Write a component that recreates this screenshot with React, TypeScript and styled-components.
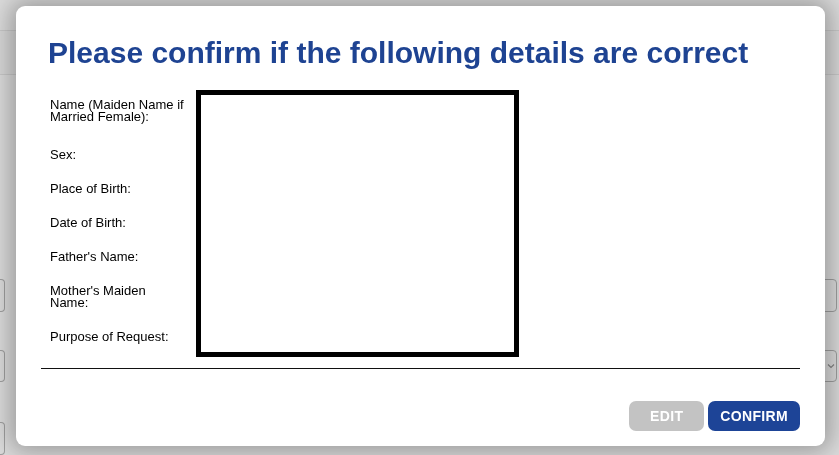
import React from "react";
import styled, { createGlobalStyle } from "styled-components";

const GlobalStyle = createGlobalStyle`
  html, body { margin: 0; padding: 0; }
  body {
    width: 839px;
    height: 455px;
    overflow: hidden;
    background: #ffffff;
    font-family: "Liberation Sans", Arial, Helvetica, sans-serif;
  }
`;

/* ---------- underlying page (dimmed by the overlay) ---------- */

const Page = styled.div`
  width: 839px;
  height: 455px;
  background: #ffffff;
  display: flex;
  flex-direction: column;
`;

const TopBand = styled.div`
  margin-top: 30px;
  height: 45px;
  border-top: 1px solid #e9e9e9;
  border-bottom: 1px solid #e9e9e9;
  background: #fbfbfb;
`;

const FieldRow = styled.div<{ $top: number }>`
  margin-top: ${(p) => p.$top}px;
  height: 34px;
  display: flex;
  justify-content: space-between;
`;

const LeftStub = styled.div`
  width: 5px;
  height: 100%;
  box-sizing: border-box;
  border: 1px solid #b9b9b9;
  border-left: none;
  border-radius: 0 4px 4px 0;
`;

const RightStub = styled.div`
  width: 14px;
  margin-right: 2px;
  height: 100%;
  box-sizing: border-box;
  border: 1px solid #b9b9b9;
  border-radius: 0 4px 4px 0;
  display: flex;
  align-items: center;
  justify-content: flex-end;
  padding-right: 1px;
`;

/* ---------- modal ---------- */

const Overlay = styled.div`
  position: fixed;
  inset: 0;
  background: rgba(0, 0, 0, 0.14);
  display: flex;
  align-items: flex-start;
  padding: 6px 0 0 16px;
`;

const Modal = styled.div`
  width: 809px;
  height: 440px;
  box-sizing: border-box;
  background: #ffffff;
  border-radius: 9px;
  box-shadow: 0 0 24px 6px rgba(0, 0, 0, 0.3);
  padding: 0 25px 15px 25px;
  display: flex;
  flex-direction: column;
`;

const Title = styled.h1`
  margin: 30px 0 0 0;
  padding-left: 7px;
  font-family: "Liberation Sans", Arial, Helvetica, sans-serif;
  font-weight: 700;
  font-size: 30px;
  line-height: 34px;
  color: #1e4392;
  white-space: nowrap;
`;

const Details = styled.div`
  margin-top: 20px;
  padding-left: 9px;
  display: flex;
  align-items: flex-start;
  gap: 10px;
`;

const Labels = styled.div`
  width: 136px;
  padding-top: 9px;
  display: flex;
  flex-direction: column;
  gap: 22px;
`;

const Label = styled.div<{ $extra?: number }>`
  font-size: 13px;
  line-height: 12px;
  color: #000000;
  margin-bottom: ${(p) => p.$extra ?? 0}px;
`;

const ValueBox = styled.div`
  width: 323px;
  height: 267px;
  box-sizing: border-box;
  border: 5px solid #000000;
  background: #ffffff;
`;

const Divider = styled.hr`
  margin: 11px 0 0 0;
  border: none;
  border-top: 1px solid #111111;
  height: 0;
`;

const Actions = styled.div`
  margin-top: auto;
  display: flex;
  justify-content: flex-end;
  gap: 4px;
`;

const Button = styled.button<{ $variant: "muted" | "primary" }>`
  height: 30px;
  min-width: 75px;
  padding: 0 12px;
  box-sizing: border-box;
  border: none;
  border-radius: 7px;
  font-family: "Liberation Sans", Arial, Helvetica, sans-serif;
  font-weight: 700;
  font-size: 14px;
  letter-spacing: 0.35px;
  color: #ffffff;
  background: ${(p) => (p.$variant === "primary" ? "#1d4497" : "#c3c3c3")};
  cursor: pointer;
`;

const labels: { text: string; extra?: number }[] = [
  { text: "Name (Maiden Name if Married Female):", extra: 4 },
  { text: "Sex:" },
  { text: "Place of Birth:" },
  { text: "Date of Birth:" },
  { text: "Father's Name:" },
  { text: "Mother's Maiden Name:" },
  { text: "Purpose of Request:" },
];

export default function App() {
  return (
    <>
      <GlobalStyle />
      <Page>
        <TopBand />
        <FieldRow $top={204}>
          <LeftStub />
          <RightStub />
        </FieldRow>
        <FieldRow $top={38}>
          <LeftStub />
          <RightStub>
            <svg width="8" height="6" viewBox="0 0 8 6">
              <path d="M1 1.5 L4 4.5 L7 1.5" fill="none" stroke="#9a9a9a" strokeWidth="1.2" />
            </svg>
          </RightStub>
        </FieldRow>
        <FieldRow $top={40}>
          <LeftStub />
          <span />
        </FieldRow>
      </Page>
      <Overlay>
        <Modal>
          <Title>Please confirm if the following details are correct</Title>
          <Details>
            <Labels>
              {labels.map((l) => (
                <Label key={l.text} $extra={l.extra}>
                  {l.text}
                </Label>
              ))}
            </Labels>
            <ValueBox />
          </Details>
          <Divider />
          <Actions>
            <Button $variant="muted">EDIT</Button>
            <Button $variant="primary">CONFIRM</Button>
          </Actions>
        </Modal>
      </Overlay>
    </>
  );
}
